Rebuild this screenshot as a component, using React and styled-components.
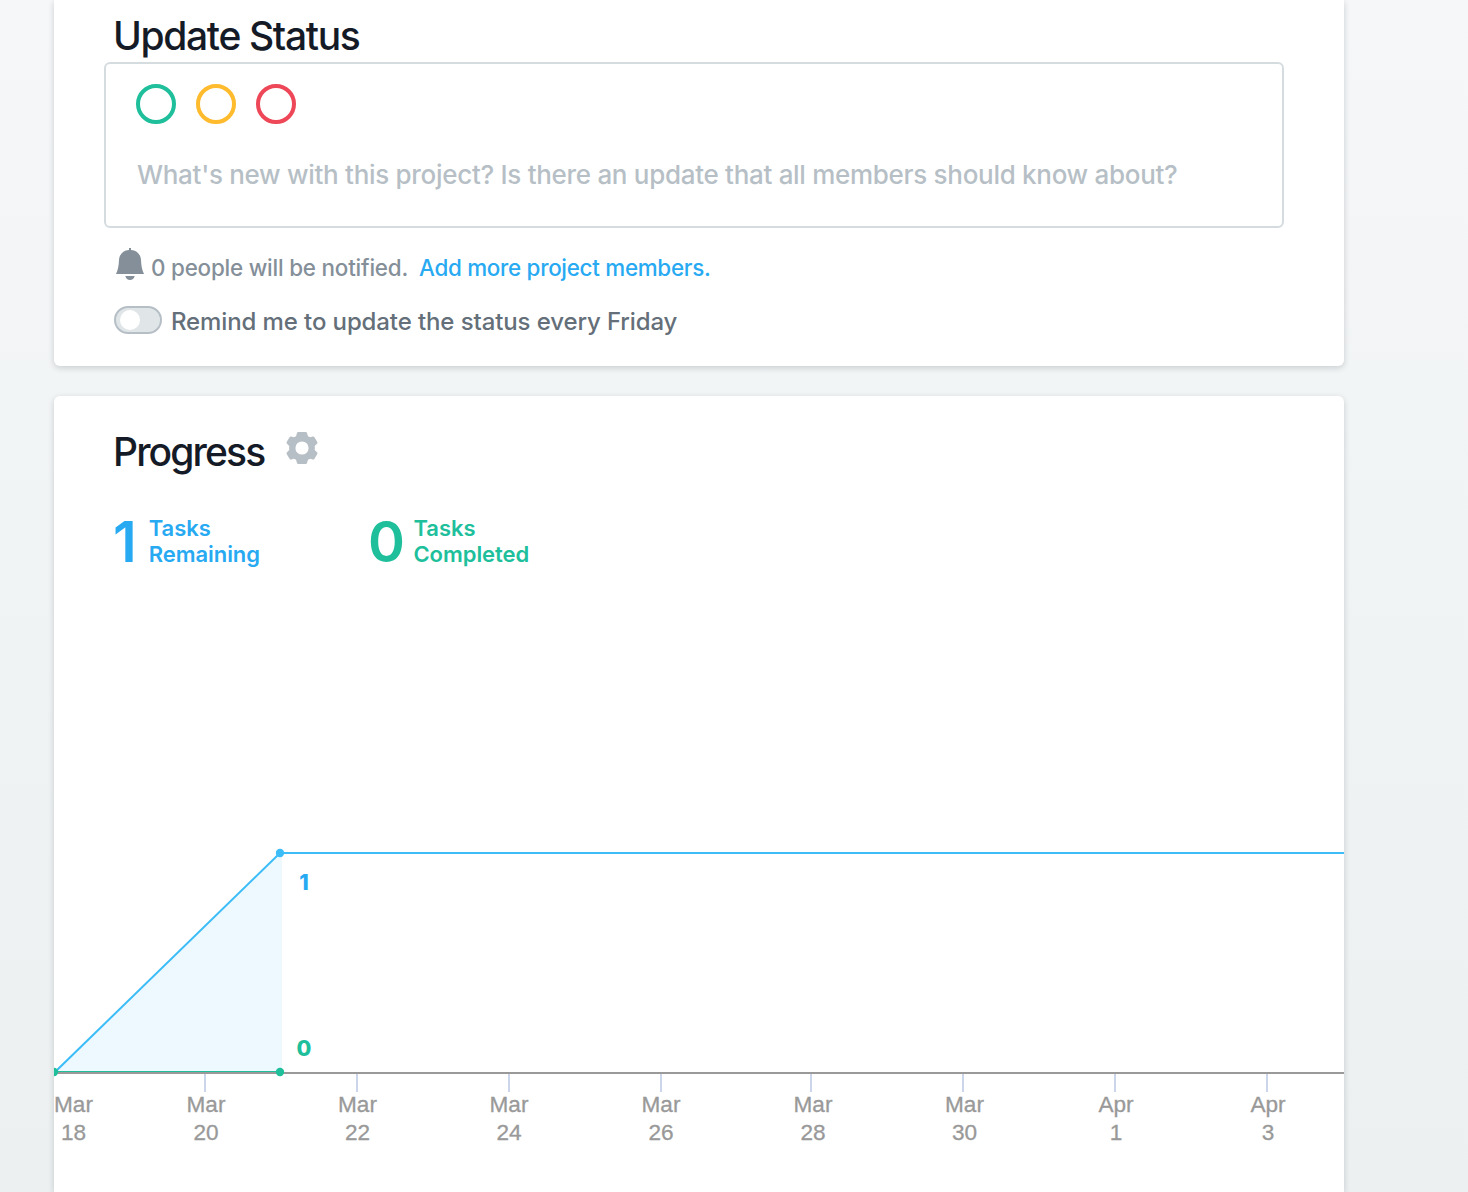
import React from "react";
import styled, { createGlobalStyle } from "styled-components";

const GlobalStyle = createGlobalStyle`
  * { box-sizing: border-box; }
  body { margin: 0; font-family: Inter, "Liberation Sans", sans-serif; }
`;

const Page = styled.main`
  height: 1192px;
  overflow: hidden;
  display: flex;
  flex-direction: column;
  gap: 30px;
  padding: 0 124px 0 54px;
  background: linear-gradient(#f5f7f8, #ecf0f1);
`;

const Card = styled.section`
  background: #fff;
  box-shadow: 0 2px 6px rgba(20, 30, 40, 0.18);
`;

const StatusCard = styled(Card)`
  height: 366px;
  padding: 12px 60px 0 50px;
  border-radius: 0 0 6px 6px;
`;

const ProgressCard = styled(Card)`
  flex: 1;
  border-radius: 6px 6px 0 0;
`;

const Title = styled.h2`
  margin: 0;
  font-size: 39px;
  line-height: 48px;
  font-weight: 500;
  letter-spacing: ${(p) => p.$spacing};
  color: #151b26;
  white-space: nowrap;
`;

const StatusTitle = styled(Title)`
  padding-left: 9px;
  height: 50px;
`;

const Composer = styled.div`
  height: 166px;
  border: 2px solid #d5dce0;
  border-radius: 6px;
  padding: 20px 30px;
`;

const Dots = styled.div`
  display: flex;
  gap: 20px;
`;

const Dot = styled.span`
  width: 40px;
  height: 40px;
  border: 4px solid ${(p) => p.$color};
  border-radius: 50%;
`;

const Placeholder = styled.p`
  margin: 34px 0 0 1px;
  font-size: 26px;
  line-height: 34px;
  font-weight: 500;
  letter-spacing: -0.3px;
  color: #b7bfc6;
  white-space: nowrap;
`;

const NotifyRow = styled.div`
  display: flex;
  align-items: center;
  height: 40px;
  margin-top: 20px;
  padding: 4px 0 4px 12px;
  font-size: 22.4px;
  line-height: 32px;
  font-weight: 500;
  white-space: nowrap;
  color: #848f99;
  letter-spacing: -0.2px;
`;

const BellIcon = styled.svg`
  flex: none;
  width: 28px;
  height: 32px;
  margin: -4px 7px 4px 0;
`;

const MembersLink = styled.a`
  margin-left: 11px;
  color: #28aaf2;
  letter-spacing: -0.28px;
`;

const RemindRow = styled.label`
  display: flex;
  align-items: center;
  height: 32px;
  margin-top: 16px;
  padding-left: 10px;
  gap: 9px;
  font-size: 24px;
  line-height: 32px;
  font-weight: 500;
  white-space: nowrap;
  color: #646f79;
  letter-spacing: -0.11px;
`;

const RemindText = styled.span`
  padding-top: 3px;
`;

const Toggle = styled.span`
  display: flex;
  align-items: center;
  width: 48px;
  height: 28px;
  padding-left: 4px;
  border: 2px solid #b7bfc6;
  border-radius: 14px;
  background: #e0e6e8;
`;

const Knob = styled.span`
  width: 20px;
  height: 20px;
  border-radius: 50%;
  background: #fff;
`;

const ProgressHeader = styled.header`
  display: flex;
  gap: 22px;
  padding: 32px 0 0 59px;
`;

const GearIcon = styled.svg`
  width: 32px;
  height: 32px;
  margin-top: 4px;
`;

const Stats = styled.div`
  display: flex;
  height: 124px;
  padding: 38px 0 0 59px;
`;

const Stat = styled.div`
  display: flex;
  flex: none;
  width: 255px;
  gap: ${(p) => p.$gap};
  color: ${(p) => p.$color};
`;

const StatValue = styled.strong`
  font-size: 56px;
  line-height: 56px;
  font-weight: 600;
`;

const StatLabel = styled.span`
  padding-top: 1px;
  font-size: 22px;
  line-height: 26px;
  font-weight: 600;
  letter-spacing: -0.05px;
`;

const Chart = styled.svg`
  display: block;
  width: 1290px;
  height: 592px;
`;

const AxisText = styled.text`
  font: 22.6px "Liberation Sans", Arial, sans-serif;
  fill: #999;
  stroke: #999;
  stroke-width: 0.3px;
  text-anchor: middle;
`;

const ValueText = styled.text`
  font: 800 21.5px Inter, sans-serif;
  fill: ${(p) => p.$color};
  text-anchor: middle;
`;

const ticks = [
  { x: 19.5, month: "Mar", day: 18 },
  { x: 152, tick: 151, month: "Mar", day: 20 },
  { x: 303.5, tick: 303, month: "Mar", day: 22 },
  { x: 455, tick: 455, month: "Mar", day: 24 },
  { x: 607, tick: 607, month: "Mar", day: 26 },
  { x: 759, tick: 757, month: "Mar", day: 28 },
  { x: 910.5, tick: 909, month: "Mar", day: 30 },
  { x: 1062, tick: 1061, month: "Apr", day: 1 },
  { x: 1214, tick: 1213, month: "Apr", day: 3 },
];

const GREEN = "#20bf9c";
const BLUE = "#28aaf2";
const LINE = "#3cbdf7";

function BurnChart() {
  return (
    <Chart viewBox="0 0 1290 592">
      <polygon points="0,473 226,253 228,253 228,472" fill="#edf8ff" />
      {ticks.map((t) => (
        <g key={t.month + t.day}>
          {t.tick && <rect x={t.tick - 1} y="474" width="2" height="18" fill="#ccd6eb" />}
          <AxisText x={t.x} y="512">{t.month}</AxisText>
          <AxisText x={t.x} y="540">{t.day}</AxisText>
        </g>
      ))}
      <rect x="0" y="471" width="226" height="2" fill={GREEN} />
      <polyline points="0,473 226,253 1290,253" fill="none" stroke={LINE} strokeWidth="2" />
      <rect x="0" y="472" width="1290" height="2" fill="#999" />
      <circle cx="226" cy="253" r="4.2" fill={LINE} />
      <circle cx="0" cy="472" r="4.2" fill={GREEN} />
      <circle cx="226" cy="472" r="4.2" fill={GREEN} />
      <ValueText x="250" y="290" $color={BLUE}>1</ValueText>
      <ValueText x="250" y="456" $color={GREEN}>0</ValueText>
    </Chart>
  );
}

export default function App() {
  return (
    <>
      <GlobalStyle />
      <Page>
        <StatusCard>
          <StatusTitle $spacing="-1.35px">Update Status</StatusTitle>
          <Composer>
            <Dots>
              <Dot $color={GREEN} />
              <Dot $color="#fdbb2d" />
              <Dot $color="#ed4758" />
            </Dots>
            <Placeholder>
              What's new with this project? Is there an update that all members should know about?
            </Placeholder>
          </Composer>
          <NotifyRow>
            <BellIcon viewBox="0 0 28 32" fill="#848f99">
              <path d="M13 0h2v2C21 2.400 24.700 6.500 25 12C25.300 18 26 22 28 26H0C2 22 2.700 18 3 12C3.300 6.500 7 2.400 13 2z" />
              <path d="M9.300 28h9.400C18 30.600 16.400 32 14 32S10 30.600 9.300 28z" />
            </BellIcon>
            <span>0 people will be notified.</span>
            <MembersLink>Add more project members.</MembersLink>
          </NotifyRow>
          <RemindRow>
            <Toggle><Knob /></Toggle>
            <RemindText>Remind me to update the status every Friday</RemindText>
          </RemindRow>
        </StatusCard>
        <ProgressCard>
          <ProgressHeader>
            <Title $spacing="-1.87px">Progress</Title>
            <GearIcon viewBox="0 0 32 32" fill="#b7bfc6">
              <path
                fillRule="evenodd"
                d="M12.200 0H19.800Q20.700 0 21 1L22 4.200Q23 4.500 24.200 5.200L26.500 4.500Q27.800 4.200 28.500 5.300L31.300 10Q31.800 11 31 11.800L28.700 14Q29.100 16 28.700 18L31 20.200Q31.800 21 31.300 22L28.500 26.700Q27.800 27.800 26.500 27.500L24.200 26.800Q23 27.500 22 27.800L21 31Q20.700 32 19.800 32H12.200Q11.300 32 11 31L10 27.800Q9 27.500 7.800 26.800L5.500 27.500Q4.200 27.800 3.500 26.700L.7 22Q.2 21 1 20.200L3.300 18Q2.900 16 3.300 14L1 11.800Q.2 11 .7 10L3.500 5.300Q4.200 4.200 5.500 4.500L7.800 5.200Q9 4.500 10 4.200L11 1Q11.300 0 12.200 0ZM16 9.400A6.600 6.600 0 1 0 16 22.600A6.600 6.600 0 1 0 16 9.400Z"
              />
            </GearIcon>
          </ProgressHeader>
          <Stats>
            <Stat $color={BLUE} $gap="12px">
              <StatValue>1</StatValue>
              <StatLabel>Tasks<br />Remaining</StatLabel>
            </Stat>
            <Stat $color={GREEN} $gap="8.5px">
              <StatValue>0</StatValue>
              <StatLabel>Tasks<br />Completed</StatLabel>
            </Stat>
          </Stats>
          <BurnChart />
        </ProgressCard>
      </Page>
    </>
  );
}
